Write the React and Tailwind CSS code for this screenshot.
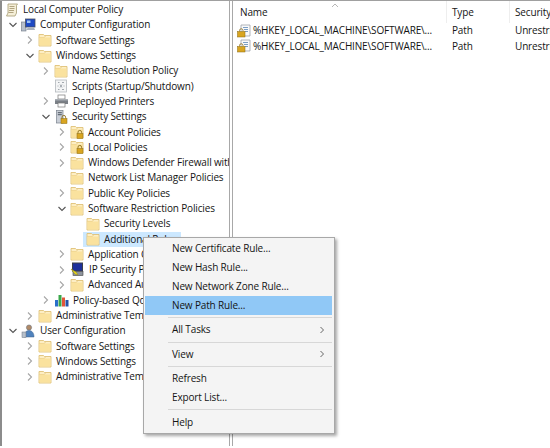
import React from "react";

const Folder = ({ lock }) => (
  <svg width="14" height="14" viewBox="0 0 14 14" className="shrink-0">
    <path d="M1 3.500V1.500h4.500l1 1H13v10.500H1z" fill="#fdeec4" stroke="#dcbb6b" strokeWidth="0.8" />
    <path d="M1.400 4.500h5l1-1.500" fill="none" stroke="#e4c77c" strokeWidth="0.8" />
    <rect x="1.500" y="4.500" width="11" height="8" fill="#fae29e" />
    {lock && <Lock />}
  </svg>
);
const Lock = () => (
  <g>
    <path d="M8 8.500V7.200a1.800 1.800 0 0 1 3.600 0v1.300" fill="none" stroke="#8a6d1d" strokeWidth="0.9" />
    <rect x="7" y="8.500" width="6" height="5" fill="#d9a520" stroke="#8a6a10" strokeWidth="0.5" />
  </g>
);
const Policy = () => (
  <svg width="14" height="14" viewBox="0 0 14 14" className="shrink-0">
    <path d="M3 1h9.500l-1 1.500V10l-1.500 3H1.500l1.500-3z" fill="#f5efd8" stroke="#a59a72" strokeWidth="0.8" />
    <path d="M4.500 3.500h5M4.500 5.500h5M4 7.500h5M3.500 9.500h5" stroke="#a0906a" strokeWidth="0.8" />
  </svg>
);
const Computer = () => (
  <svg width="15" height="14" viewBox="0 0 15 14" className="shrink-0">
    <rect x="0.500" y="4" width="4.500" height="9" fill="#b7bfca" stroke="#6d7683" strokeWidth="0.6" />
    <rect x="4.500" y="1" width="9.500" height="8" fill="#1d49c4" stroke="#4a5160" strokeWidth="0.8" />
    <rect x="6" y="2.500" width="3.500" height="2.500" fill="#9cc2f2" />
    <path d="M5 12h9l-1-2.500H7z" fill="#aab2be" />
  </svg>
);
const Scripts = () => (
  <svg width="14" height="14" viewBox="0 0 14 14" className="shrink-0">
    <rect x="1.500" y="1" width="11" height="12" fill="#f4f5f6" stroke="#b4b8bd" strokeWidth="0.8" />
    <path d="M4 3.500h1.500M8 3.500h2M3.500 7h1M9.500 7h1M4 10.500h1.500M8 10.500h2M6 5.500l2 3M8 5.500l-2 3" stroke="#8d949c" strokeWidth="0.8" />
  </svg>
);
const Printer = () => (
  <svg width="15" height="14" viewBox="0 0 15 14" className="shrink-0">
    <rect x="4" y="1" width="7" height="4" fill="#fff" stroke="#777" strokeWidth="0.7" />
    <rect x="1" y="5" width="13" height="5" fill="#7a7f86" />
    <rect x="1" y="5" width="13" height="1.500" fill="#a8adb3" />
    <rect x="4" y="9" width="7" height="4" fill="#fff" stroke="#777" strokeWidth="0.7" />
  </svg>
);
const Security = () => (
  <svg width="14" height="14" viewBox="0 0 14 14" className="shrink-0">
    <rect x="2.500" y="0.500" width="6.500" height="12.500" fill="#c9ced6" stroke="#7a828e" strokeWidth="0.7" />
    <rect x="3.800" y="2.200" width="4" height="1" fill="#4d5662" />
    <rect x="3.800" y="4.200" width="4" height="1" fill="#4d5662" />
    <Lock />
  </svg>
);
const IPSec = () => (
  <svg width="15" height="15" viewBox="0 0 15 15" className="shrink-0">
    <rect x="2.500" y="1" width="10" height="8" fill="#1c2f9a" stroke="#3a3f4a" strokeWidth="1" />
    <rect x="3" y="9.500" width="10" height="4" fill="#8d939c" stroke="#444" strokeWidth="0.6" />
    <path d="M1 7l5 3 2 3-3-1z" fill="#f3e11f" stroke="#8f8410" strokeWidth="0.5" />
  </svg>
);
const Chart = () => (
  <svg width="15" height="14" viewBox="0 0 15 14" className="shrink-0">
    <rect x="1" y="7" width="3" height="6.500" fill="#2a6fc9" />
    <rect x="4.500" y="2" width="3" height="11.500" fill="#3aa84a" />
    <rect x="8" y="4.500" width="3" height="9" fill="#e0563a" />
    <rect x="11.500" y="7" width="3" height="6.500" fill="#2553a8" />
  </svg>
);
const UserCfg = () => (
  <svg width="15" height="14" viewBox="0 0 15 14" className="shrink-0">
    <circle cx="8" cy="3.500" r="2.600" fill="#b08a68" stroke="#5e6a78" strokeWidth="0.5" />
    <path d="M3 13c0-4 2-6.500 5-6.500s5 2.500 5 6.500z" fill="#4f82bd" stroke="#41628a" strokeWidth="0.5" />
    <rect x="1" y="8" width="4" height="5.500" fill="#b7c0cb" stroke="#6d7683" strokeWidth="0.5" />
  </svg>
);
const RuleIcon = () => (
  <svg width="15" height="14" viewBox="0 0 15 14" className="shrink-0">
    <path d="M4 1h9v11H4z" fill="#fafafa" stroke="#8f969d" strokeWidth="0.7" />
    <path d="M6 3.500h5M7 5.500h4M8 7.500h3" stroke="#5b86b5" strokeWidth="0.8" />
    <path d="M2.500 7.500V6.500a1.500 1.500 0 0 1 3.500 0v1" fill="none" stroke="#8a6d1d" strokeWidth="0.8" />
    <rect x="0.500" y="7.500" width="7.500" height="5.500" fill="#d9a520" stroke="#8a6a10" strokeWidth="0.5" />
  </svg>
);

const Chev = ({ kind }) => (
  <span className="w-[10px] h-[10px] shrink-0 flex items-center justify-center">
    {kind === "open" && (
      <svg width="10" height="10" viewBox="0 0 10 10"><path d="M1.500 3l3.500 3.500L8.500 3" fill="none" stroke="#555" strokeWidth="1.100" /></svg>
    )}
    {kind === "closed" && (
      <svg width="10" height="10" viewBox="0 0 10 10"><path d="M3 1.500L6.500 5 3 8.500" fill="none" stroke="#a6a6a6" strokeWidth="1.100" /></svg>
    )}
  </span>
);

const tree = [
  { l: 0, c: null, i: <Policy />, t: "Local Computer Policy", root: true },
  { l: 1, c: "open", i: <Computer />, t: "Computer Configuration" },
  { l: 2, c: "closed", i: <Folder />, t: "Software Settings" },
  { l: 2, c: "open", i: <Folder />, t: "Windows Settings" },
  { l: 3, c: "closed", i: <Folder />, t: "Name Resolution Policy" },
  { l: 3, c: null, i: <Scripts />, t: "Scripts (Startup/Shutdown)" },
  { l: 3, c: "closed", i: <Printer />, t: "Deployed Printers" },
  { l: 3, c: "open", i: <Security />, t: "Security Settings" },
  { l: 4, c: "closed", i: <Folder lock />, t: "Account Policies" },
  { l: 4, c: "closed", i: <Folder lock />, t: "Local Policies" },
  { l: 4, c: "closed", i: <Folder />, t: "Windows Defender Firewall with Advanced Security" },
  { l: 4, c: null, i: <Folder />, t: "Network List Manager Policies" },
  { l: 4, c: "closed", i: <Folder />, t: "Public Key Policies" },
  { l: 4, c: "open", i: <Folder />, t: "Software Restriction Policies" },
  { l: 5, c: null, i: <Folder />, t: "Security Levels" },
  { l: 5, c: null, i: <Folder />, t: "Additional Rules", sel: true },
  { l: 4, c: "closed", i: <Folder />, t: "Application Control Policies" },
  { l: 4, c: "closed", i: <IPSec />, t: "IP Security Policies on Local Computer" },
  { l: 4, c: "closed", i: <Folder />, t: "Advanced Audit Policy Configuration" },
  { l: 3, c: "closed", i: <Chart />, t: "Policy-based QoS" },
  { l: 2, c: "closed", i: <Folder />, t: "Administrative Templates" },
  { l: 1, c: "open", i: <UserCfg />, t: "User Configuration" },
  { l: 2, c: "closed", i: <Folder />, t: "Software Settings" },
  { l: 2, c: "closed", i: <Folder />, t: "Windows Settings" },
  { l: 2, c: "closed", i: <Folder />, t: "Administrative Templates" },
];

const pad = ["pl-[3px]", "pl-[6px]", "pl-[23px]", "pl-[39px]", "pl-[55px]", "pl-[71px]"];

const Row = ({ r }) => (
  <div className={`flex items-center h-[15.3px] whitespace-nowrap ${pad[r.l]}`}>
    {!r.root && <Chev kind={r.c} />}
    <span className={`flex items-center gap-[4px] ${r.sel ? "bg-[#cce8ff] pl-[3px]" : ""} ${r.root || r.sel ? "ml-[0px]" : "ml-[3px]"}`}>
      {r.i}
      <span className="pr-[4px]">{r.t}</span>
    </span>
  </div>
);

const Sep = () => <div className="h-px bg-[#d7d7d7] ml-[23px] my-[2.2px]" />;
const Item = ({ t, hot, sub }) => (
  <div className={`flex items-center justify-between h-[19px] pl-[27px] pr-[7px] ${hot ? "bg-[#90c8f6]" : ""}`}>
    <span>{t}</span>
    {sub && (
      <svg width="6" height="8" viewBox="0 0 6 8"><path d="M1.500 1L4.500 4 1.500 7" fill="none" stroke="#666" strokeWidth="1" /></svg>
    )}
  </div>
);

export default function App() {
  return (
    <div className="relative w-[550px] h-[448px] bg-white overflow-hidden text-[10px] tracking-[-0.15px] text-[#141414] [font-family:'Open_Sans','Noto_Sans',sans-serif]">
      <div className="flex h-[446px] border-t border-t-[#a0a0a0]">
        <div className="w-[230px] shrink-0 border-l-2 border-l-[#8c8c8c] border-r border-r-[#a8a8a8] overflow-hidden pt-[1px]">
          {tree.map((r, i) => <Row key={i} r={r} />)}
        </div>
        <div className="w-[2px] shrink-0" />
        <div className="flex-1 border-l border-l-[#a8a8a8] overflow-hidden relative">
          <div className="flex h-[22px] items-center">
            <div className="w-[214px] pl-[7px] shrink-0 relative h-full flex items-center border-r border-r-[#eeeeee]">Name
              <svg className="absolute left-[98px] top-[2px]" width="8" height="5" viewBox="0 0 8 5"><path d="M1 4l3-3 3 3" fill="none" stroke="#a5a5a5" strokeWidth="0.800" /></svg>
            </div>
            <div className="w-[63px] pl-[5px] shrink-0 h-full flex items-center border-r border-r-[#eeeeee]">Type</div>
            <div className="pl-[5px] whitespace-nowrap">Security Level</div>
          </div>
          {[0, 1].map((k) => (
            <div key={k} className="flex h-[15.5px] items-center whitespace-nowrap">
              <div className="w-[214px] pl-[4px] shrink-0 flex items-center gap-[1px]"><RuleIcon /><span>%HKEY_LOCAL_MACHINE\SOFTWARE\...</span></div>
              <div className="w-[63px] pl-[5px] shrink-0">Path</div>
              <div className="pl-[5px]">Unrestricted</div>
            </div>
          ))}
        </div>
      </div>
      <div className="absolute left-[143px] top-[237px] w-[192px] h-[197px] bg-[#f4f4f4] border border-[#a8a8a8] shadow-[2px_2px_3px_rgba(0,0,0,0.35)] pl-[1px] pr-[2px] py-[1px]">
        <Item t="New Certificate Rule..." />
        <Item t="New Hash Rule..." />
        <Item t="New Network Zone Rule..." />
        <Item t="New Path Rule..." hot />
        <Sep />
        <Item t="All Tasks" sub />
        <Sep />
        <Item t="View" sub />
        <Sep />
        <Item t="Refresh" />
        <Item t="Export List..." />
        <Sep />
        <Item t="Help" />
      </div>
    </div>
  );
}
